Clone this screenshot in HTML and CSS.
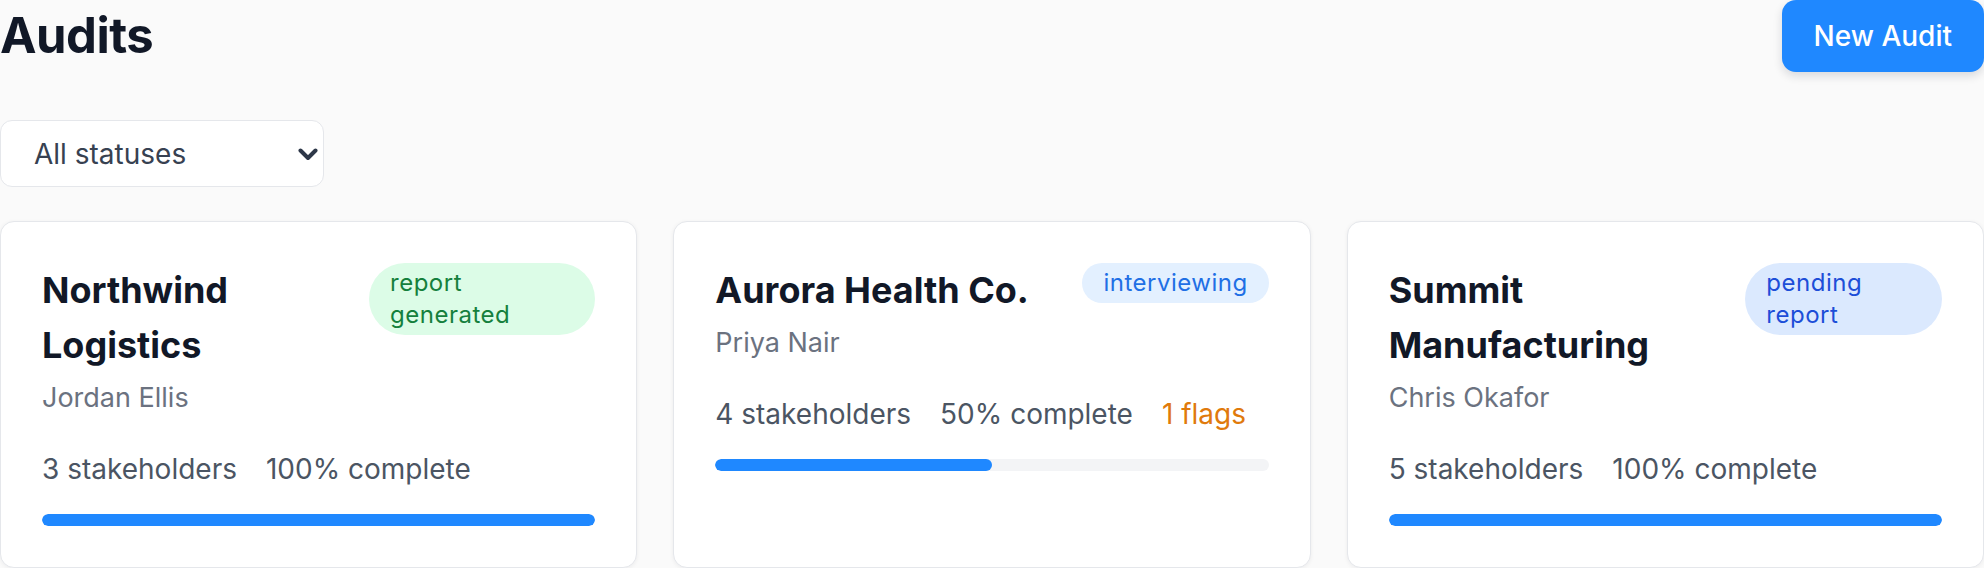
FILE: index.html
```html
<!DOCTYPE html>
<html lang="en">
<head>
<meta charset="utf-8">
<title>Audits</title>
<link rel="stylesheet" href="styles.css">
</head>
<body>
<main class="page">
  <header class="page-header">
    <h1 class="page-title">Audits</h1>
    <button class="btn-primary" type="button">New Audit</button>
  </header>

  <div class="filters">
    <div class="select-wrap">
      <select class="status-select">
        <option>All statuses</option>
        <option>interviewing</option>
        <option>pending report</option>
        <option>report generated</option>
      </select>
      <svg class="select-chevron" width="20" height="13" viewBox="0 0 20 13" aria-hidden="true">
        <path d="M2.5 2.5 L10 10 L17.5 2.5" fill="none" stroke="#2d3748" stroke-width="4" stroke-linecap="round" stroke-linejoin="round"/>
      </svg>
    </div>
  </div>

  <section class="audit-grid">
    <article class="card">
      <div class="card-head">
        <h2 class="card-title">Northwind Logistics</h2>
        <span class="badge badge-green">report generated</span>
      </div>
      <p class="owner">Jordan Ellis</p>
      <div class="meta">
        <span>3 stakeholders</span>
        <span>100% complete</span>
      </div>
      <div class="progress"><div class="progress-fill" style="width:100%"></div></div>
    </article>

    <article class="card">
      <div class="card-head">
        <h2 class="card-title">Aurora Health Co.</h2>
        <span class="badge badge-sky">interviewing</span>
      </div>
      <p class="owner">Priya Nair</p>
      <div class="meta">
        <span>4 stakeholders</span>
        <span>50% complete</span>
        <span class="flags">1 flags</span>
      </div>
      <div class="progress"><div class="progress-fill" style="width:50%"></div></div>
    </article>

    <article class="card">
      <div class="card-head">
        <h2 class="card-title">Summit Manufacturing</h2>
        <span class="badge badge-blue">pending report</span>
      </div>
      <p class="owner">Chris Okafor</p>
      <div class="meta">
        <span>5 stakeholders</span>
        <span>100% complete</span>
      </div>
      <div class="progress"><div class="progress-fill" style="width:100%"></div></div>
    </article>
  </section>
</main>
</body>
</html>
```

FILE: styles.css
```css
* {
  box-sizing: border-box;
}

html, body {
  margin: 0;
  padding: 0;
}

body {
  background: #fafafa;
  font-family: Inter, "Noto Sans", "Liberation Sans", sans-serif;
  color: #111827;
}

.page {
  width: 1984px;
}

.page-header {
  display: flex;
  justify-content: space-between;
  align-items: center;
  height: 72px;
}

.page-title {
  margin: 0;
  font-size: 49px;
  font-weight: 700;
  line-height: 60px;
  letter-spacing: -0.5px;
  color: #111827;
}

.btn-primary {
  height: 72px;
  padding: 0 32px;
  border: none;
  border-radius: 14px;
  background: #1f88ff;
  color: #ffffff;
  font-family: inherit;
  font-size: 28px;
  font-weight: 500;
  box-shadow: 0 4px 10px rgba(15, 23, 42, 0.14);
}

.filters {
  margin-top: 48px;
}

.select-wrap {
  position: relative;
  width: 324px;
}

.status-select {
  appearance: none;
  -webkit-appearance: none;
  width: 324px;
  height: 67px;
  padding: 0 60px 0 33px;
  border: 1.5px solid #e5e7eb;
  border-radius: 12px;
  background: #ffffff;
  font-family: inherit;
  font-size: 28px;
  color: #374151;
}

.select-chevron {
  position: absolute;
  right: 6px;
  top: 28px;
  width: 20px;
  height: 13px;
  pointer-events: none;
}

.audit-grid {
  margin-top: 34px;
  display: grid;
  grid-template-columns: repeat(3, 1fr);
  gap: 36px;
}

.card {
  background: #ffffff;
  border: 1.5px solid #e5e7eb;
  border-radius: 14px;
  padding: 41px;
  box-shadow: 0 1px 4px rgba(15, 23, 42, 0.06);
}

.card-head {
  display: flex;
  justify-content: space-between;
  align-items: flex-start;
}

.card-title {
  margin: 0;
  font-size: 36px;
  font-weight: 700;
  line-height: 55px;
  letter-spacing: 0;
  color: #111827;
}

.badge {
  display: inline-block;
  padding: 4px 21px;
  border-radius: 999px;
  font-size: 24px;
  line-height: 32px;
  letter-spacing: 0.5px;
}

.badge-green {
  background: #dcfce7;
  color: #15803d;
}

.badge-sky {
  background: #e3f0ff;
  color: #1f6fe5;
}

.badge-blue {
  background: #dbe9fe;
  color: #1d4ed8;
}

.owner {
  margin: 4px 0 0;
  font-size: 27px;
  line-height: 42px;
  color: #6b7280;
}

.meta {
  margin-top: 29px;
  display: flex;
  gap: 29px;
  font-size: 28px;
  line-height: 42px;
  color: #4b5563;
}

.flags {
  color: #e07a0c;
}

.progress {
  margin-top: 24px;
  height: 12px;
  border-radius: 999px;
  background: #f3f4f6;
  overflow: hidden;
}

.progress-fill {
  height: 100%;
  border-radius: 999px;
  background: #1f88ff;
}
```
